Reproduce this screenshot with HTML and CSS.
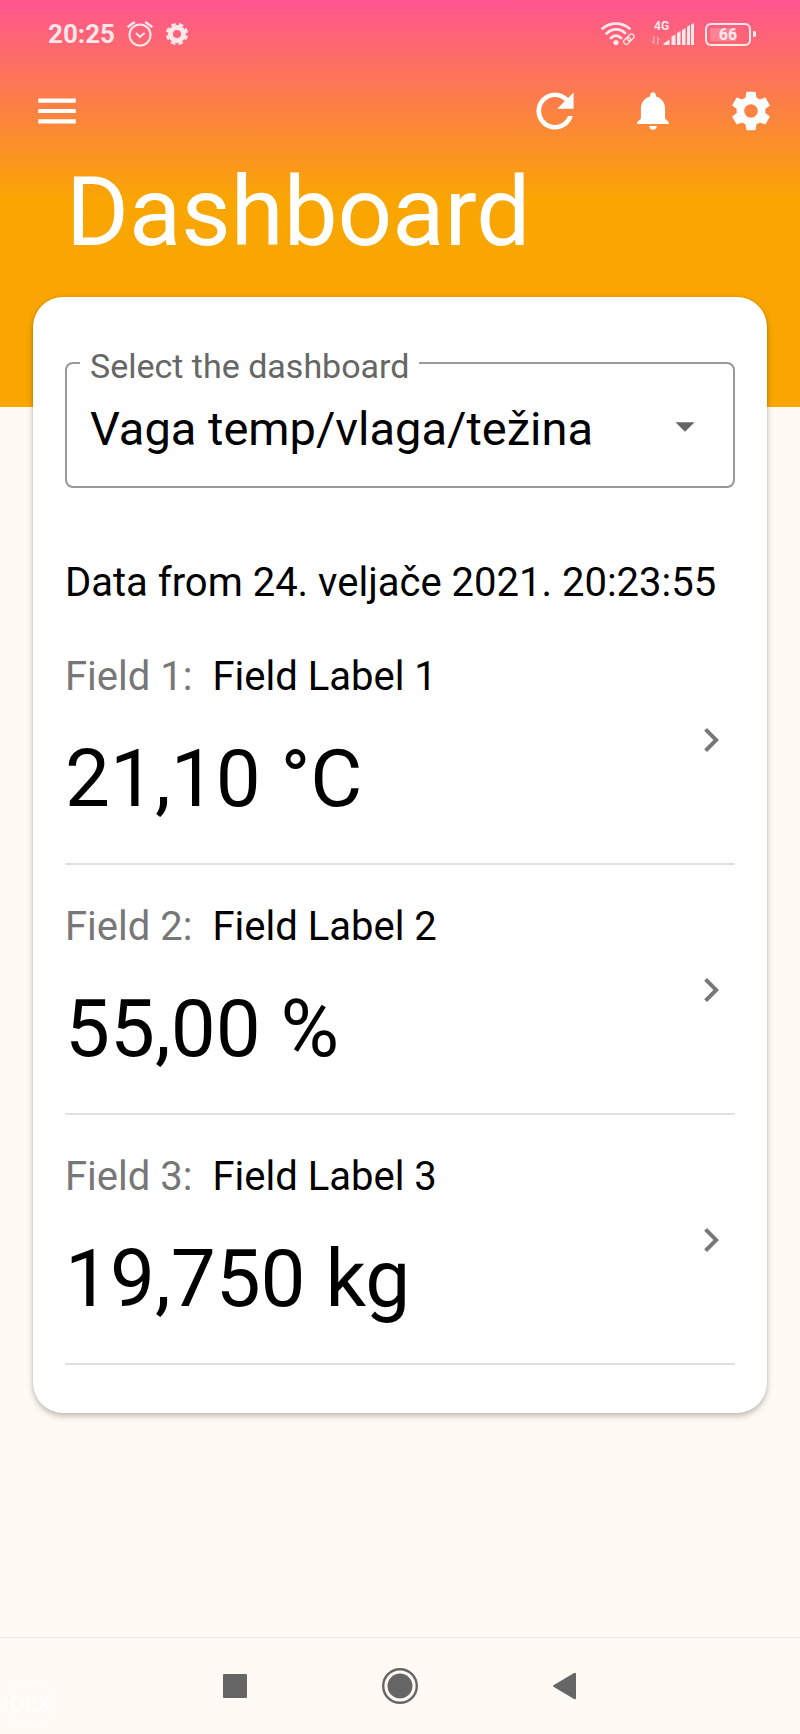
FILE: index.html
```html
<!DOCTYPE html>
<html lang="en">
<head>
    <meta charset="UTF-8">
    <title>Dashboard</title>
    <meta name="viewport" content="width=device-width, initial-scale=1.0">
    <link rel="stylesheet" href="styles.css">
</head>
<body>
    <header class="header">
        <div class="status-bar">
            <span class="clock">20:25</span>
            <svg class="status-alarm" width="26" height="26" viewBox="0 0 26 26" fill="none" stroke="currentColor" stroke-width="2" stroke-linecap="round">
                <circle cx="13" cy="14" r="10.5"/>
                <path d="M9.5 12.5l3.5 3.5 4-3.5"/>
                <path d="M1.5 5.5L7 1.5M24.5 5.5L19 1.5" stroke-width="2.4"/>
            </svg>
            <svg class="status-gear" width="24" height="24" viewBox="0 0 24 24" fill="none" stroke="currentColor">
                <circle cx="12" cy="12" r="6.5" stroke-width="5"/>
                <circle cx="12" cy="12" r="9.9" stroke-width="2.4" stroke-dasharray="4.6 3.17" stroke-dashoffset="-1.6"/>
            </svg>
            <svg class="status-wifi" width="34" height="24" viewBox="0 0 34 24" fill="none" stroke="currentColor">
                <path stroke-width="2.8" stroke-linecap="round" d="M1.5 6.5C9 0 21 0 28.500 6.500M5.500 11.500C11 6 19 6 24 11M10 16c3-3 7-3 10 0"/>
                <circle cx="15" cy="20.5" r="2.6" fill="currentColor" stroke="none"/>
                <g stroke-width="1.3" transform="rotate(-45 28 17)">
                    <rect x="21.5" y="14.5" width="7.5" height="5" rx="2.5"/>
                    <rect x="26.5" y="14.5" width="7.5" height="5" rx="2.5"/>
                </g>
            </svg>
            <span class="network">4G</span>
            <svg class="status-signal" width="44" height="24" viewBox="0 0 44 24" fill="currentColor">
                <path opacity="0.5" d="M3 14h1.500v9L1 19h2zM7 23v-9l3 4H8.500v5z"/>
                <path d="M13.500 21.500l6-4V23h-6zM21.500 14.500l4-2V23h-4zM27 11l3.500-2v14H27zM32 8l3.500-2v17H32zM37 5l3-2v20h-3zM41 2.500L44 1v22h-3z"/>
            </svg>
            <span class="battery"><span class="battery-level">66</span></span>
        </div>
        <nav class="toolbar">
            <button class="menu-button" aria-label="Menu">
                <svg width="50" height="50" viewBox="0 0 24 24"><path d="M3 18h18v-2H3v2zm0-5h18v-2H3v2zm0-7v2h18V6H3z"/></svg>
            </button>
            <button class="tool-button" aria-label="Refresh">
                <svg width="54" height="54" viewBox="0 0 512 512"><path d="M256 388c-72.597 0-132-59.405-132-132 0-72.601 59.403-132 132-132 36.3 0 69.299 15.4 92.406 39.601L278 234h154V80l-51.698 51.702C348.406 99.798 304.406 80 256 80c-96.797 0-176 79.203-176 176s78.094 176 176 176c81.045 0 148.287-54.134 169.401-128H378.85c-18.745 49.561-67.138 84-122.85 84z"/></svg>
            </button>
            <button class="tool-button" aria-label="Notifications">
                <svg width="46" height="46" viewBox="0 0 512 512"><path d="M256 464c22.779 0 41.411-18.719 41.411-41.6h-82.823c0 22.881 18.633 41.6 41.412 41.6zm134.589-124.8V224.8c0-63.44-44.516-117.518-103.53-131.041V79.2c0-17.682-13.457-31.2-31.059-31.2s-31.059 13.518-31.059 31.2v14.559c-59.015 13.523-103.53 67.601-103.53 131.041v114.4L80 380.8v20.8h352v-20.8l-41.411-41.6z"/></svg>
            </button>
            <button class="tool-button" aria-label="Settings">
                <svg width="46" height="46" viewBox="0 0 24 24"><path d="M19.43 12.98c.04-.32.07-.64.07-.98s-.03-.66-.07-.98l2.11-1.65c.19-.15.24-.42.12-.64l-2-3.46c-.12-.22-.39-.3-.61-.22l-2.49 1c-.52-.4-1.08-.73-1.69-.98l-.38-2.65C14.46 2.18 14.25 2 14 2h-4c-.25 0-.46.18-.49.42l-.38 2.65c-.61.25-1.17.59-1.69.98l-2.49-1c-.23-.09-.49 0-.61.22l-2 3.46c-.13.22-.07.49.12.64l2.11 1.65c-.04.32-.07.65-.07.98s.03.66.07.98l-2.11 1.65c-.19.15-.24.42-.12.64l2 3.46c.12.22.39.3.61.22l2.49-1c.52.4 1.08.73 1.69.98l.38 2.65c.03.24.24.42.49.42h4c.25 0 .46-.18.49-.42l.38-2.65c.61-.25 1.17-.59 1.69-.98l2.49 1c.23.09.49 0 .61-.22l2-3.46c.12-.22.07-.49-.12-.64l-2.11-1.65zM12 15.5c-1.93 0-3.5-1.57-3.5-3.5s1.57-3.5 3.5-3.5 3.5 1.57 3.5 3.5-1.57 3.5-3.5 3.5z"/></svg>
            </button>
        </nav>
        <h1 class="title">Dashboard</h1>
    </header>

    <main class="card">
        <fieldset class="field-box">
            <legend class="field-legend"><label for="dashboard">Select the dashboard</label></legend>
            <div class="select-wrap">
                <select id="dashboard" class="select">
                    <option>Vaga temp/vlaga/težina</option>
                </select>
                <svg class="select-arrow" width="46" height="46" viewBox="0 0 24 24"><path d="M7 10l5 5 5-5z"/></svg>
            </div>
        </fieldset>

        <p class="timestamp">Data from 24. veljače 2021. 20:23:55</p>

        <ul class="readings">
            <li>
                <a class="reading" href="#field1">
                    <span class="reading-text">
                        <span class="reading-label"><span class="muted">Field 1:</span> <span>Field Label 1</span></span>
                        <span class="reading-value">21,10 °C</span>
                    </span>
                    <svg class="chevron" width="48" height="48" viewBox="0 0 24 24"><path d="M8.59 16.59L13.17 12 8.59 7.41 10 6l6 6-6 6-1.41-1.41z"/></svg>
                </a>
            </li>
            <li>
                <a class="reading" href="#field2">
                    <span class="reading-text">
                        <span class="reading-label"><span class="muted">Field 2:</span> <span>Field Label 2</span></span>
                        <span class="reading-value">55,00 %</span>
                    </span>
                    <svg class="chevron" width="48" height="48" viewBox="0 0 24 24"><path d="M8.59 16.59L13.17 12 8.59 7.41 10 6l6 6-6 6-1.41-1.41z"/></svg>
                </a>
            </li>
            <li>
                <a class="reading" href="#field3">
                    <span class="reading-text">
                        <span class="reading-label"><span class="muted">Field 3:</span> <span>Field Label 3</span></span>
                        <span class="reading-value">19,750 kg</span>
                    </span>
                    <svg class="chevron" width="48" height="48" viewBox="0 0 24 24"><path d="M8.59 16.59L13.17 12 8.59 7.41 10 6l6 6-6 6-1.41-1.41z"/></svg>
                </a>
            </li>
        </ul>
    </main>

    <footer class="nav-bar">
        <span class="watermark">OLX</span>
        <button class="nav-button" aria-label="Recent apps">
            <svg width="36" height="36" viewBox="0 0 36 36"><rect x="6" y="6" width="24" height="24" rx="1"/></svg>
        </button>
        <button class="nav-button" aria-label="Home">
            <svg width="36" height="36" viewBox="0 0 36 36"><circle cx="18" cy="18" r="12.5"/><circle cx="18" cy="18" r="16.8" fill="none" stroke="currentColor" stroke-width="2.4"/></svg>
        </button>
        <button class="nav-button" aria-label="Back">
            <svg width="36" height="36" viewBox="0 0 36 36"><path d="M6.5 17.2L27 5q2-1 2 1v24q0 2-2 1L6.500 18.800q-1-.8 0-1.600z"/></svg>
        </button>
    </footer>
</body>
</html>
```

FILE: styles.css
```css
* {
    box-sizing: border-box;
}
body {
    margin: 0;
    min-height: 100vh;
    display: flex;
    flex-direction: column;
    font-family: Roboto, "Liberation Sans", sans-serif;
    background-color: #fffaf3;
    color: #000;
}
button {
    display: flex;
    align-items: center;
    justify-content: center;
    padding: 0;
    border: none;
    background: none;
    color: inherit;
    cursor: pointer;
}
svg {
    display: block;
    flex: none;
    fill: currentColor;
}
svg[fill="none"] {
    fill: none;
}

/* header */
.header {
    padding-bottom: 137px;
    background: linear-gradient(to bottom, #ff5591 0, #f9a602 200px);
    color: white;
}
.status-bar {
    display: flex;
    align-items: center;
    height: 68px;
    padding: 0 44px 0 48px;
    color: rgba(255, 255, 255, 0.85);
}
.clock {
    font-size: 26px;
    font-weight: bold;
}
.status-alarm {
    margin-left: 12px;
}
.status-gear {
    margin-left: 12px;
}
.status-wifi {
    margin-left: auto;
}
.network {
    align-self: flex-start;
    margin-top: 20px;
    margin-left: 19px;
    width: 14px;
    font-size: 12px;
    font-weight: bold;
    line-height: 13px;
}
.status-signal {
    margin-left: -18px;
}
.battery {
    display: flex;
    align-items: center;
    margin-left: 11px;
}
.battery::after {
    content: "";
    width: 3px;
    height: 6px;
    margin-left: 2px;
    border-radius: 1px;
    background-color: currentColor;
}
.battery-level {
    width: 46px;
    height: 23px;
    border: 2px solid currentColor;
    border-radius: 6px;
    background: linear-gradient(rgba(255, 255, 255, 0.2), rgba(255, 255, 255, 0.2)) 3px 3px / 26px 13px no-repeat;
    font-size: 16px;
    font-weight: bold;
    line-height: 20px;
    text-align: center;
}
.toolbar {
    display: flex;
    align-items: center;
    height: 86px;
    padding-left: 32px;
}
.menu-button {
    margin-right: auto;
}
.tool-button {
    width: 98px;
    height: 86px;
}
.title {
    margin: 0;
    padding: 0 66px;
    font-size: 96px;
    font-weight: normal;
    line-height: 116px;
}

/* card */
.card {
    margin: -110px 33px 0;
    padding: 42px 32px 48px;
    border-radius: 30px;
    background-color: white;
    box-shadow: 0 3px 6px rgba(0, 0, 0, 0.25), 0 0 2px rgba(0, 0, 0, 0.15);
}
.field-box {
    min-width: 0;
    margin: 0;
    padding: 0 13px 16px;
    border: 2px solid #999;
    border-radius: 8px;
}
.field-legend {
    padding: 6px 10px 0;
    font-size: 34px;
    line-height: 42px;
    color: #666;
}
.select-wrap {
    display: grid;
    align-items: center;
}
.select {
    grid-area: 1 / 1;
    appearance: none;
    width: 100%;
    height: 83px;
    padding: 0 56px 0 10px;
    border: none;
    background: none;
    font-family: inherit;
    font-size: 47px;
    color: #000;
}
.select-arrow {
    grid-area: 1 / 1;
    justify-self: end;
    margin: 0 12px 6px 0;
    color: #666;
    pointer-events: none;
}
.timestamp {
    margin: 71px 0 8px;
    font-size: 40px;
    line-height: 48px;
}
.readings {
    margin: 0;
    padding: 0;
    list-style: none;
}
.reading {
    display: flex;
    align-items: center;
    justify-content: space-between;
    padding: 38px 0 36px;
    border-bottom: 2px solid #e0e0e0;
    color: inherit;
    text-decoration: none;
}
.reading-text {
    display: flex;
    flex-direction: column;
    gap: 30px;
}
.reading-label {
    display: flex;
    gap: 20px;
    font-size: 40px;
    line-height: 48px;
}
.muted {
    color: #777;
}
.reading-value {
    font-size: 80px;
    line-height: 96px;
}
.chevron {
    color: #777;
}

/* system navigation */
.nav-bar {
    position: relative;
    display: flex;
    align-items: center;
    justify-content: center;
    gap: 117px;
    height: 97px;
    margin-top: auto;
    border-top: 1px solid #ede8e2;
    color: #666;
}
.nav-button {
    width: 48px;
    height: 48px;
}
.watermark {
    position: absolute;
    left: 5px;
    bottom: 5px;
    width: 50px;
    height: 50px;
    border: 2px solid rgba(255, 255, 255, 0.5);
    border-radius: 50%;
    color: white;
    font-size: 22px;
    font-weight: bold;
    line-height: 46px;
    text-align: center;
}
```
